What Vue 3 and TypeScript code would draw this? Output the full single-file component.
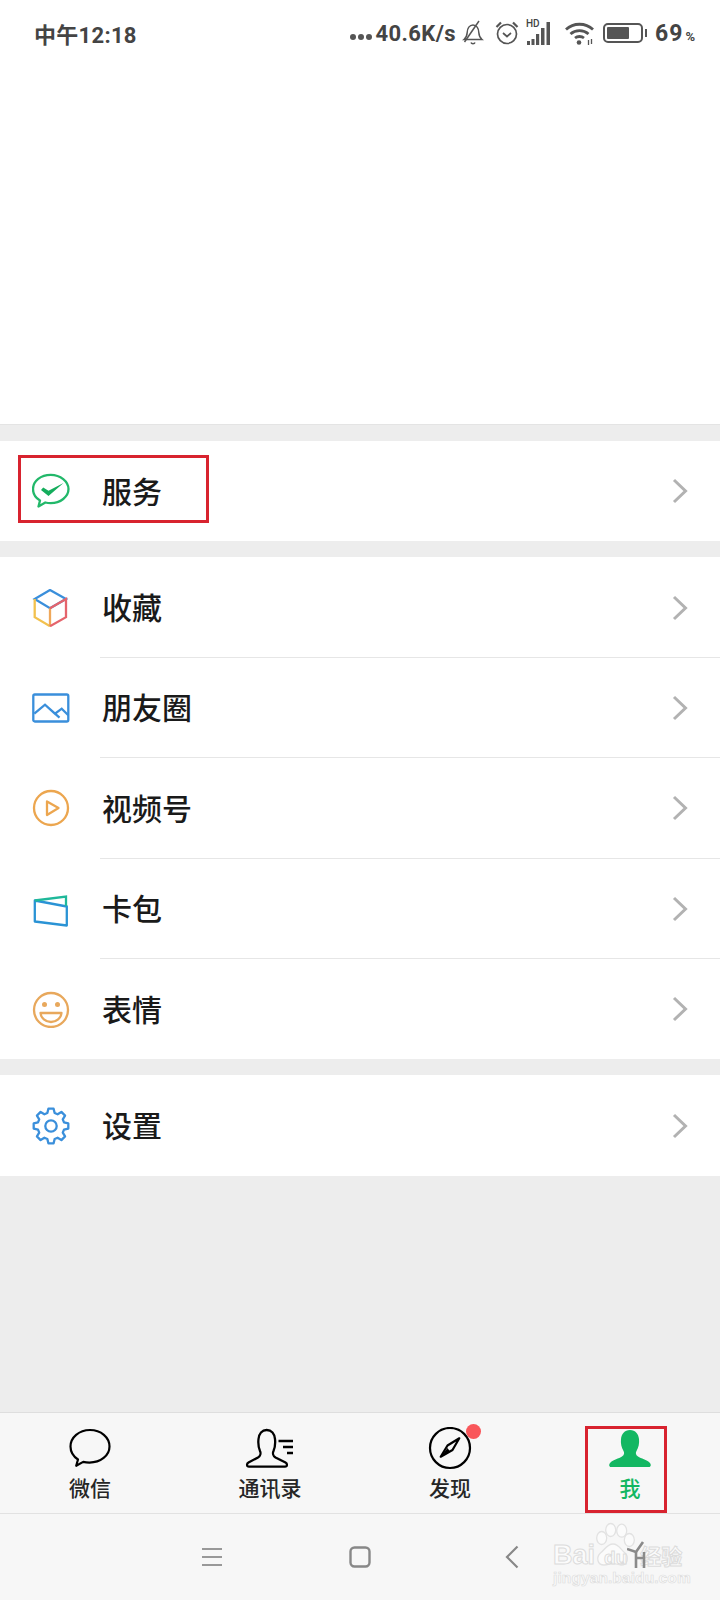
<template>
  <div class="phone">
    <div class="top">
      <div class="status">
        <span class="clock">中午12:18</span>
        <div class="status-right">
          <span class="dots"><i></i><i></i><i></i></span>
          <span class="speed">40.6K/s</span>
          <svg class="s-bell" width="22" height="26" viewBox="0 0 22 26" fill="none" stroke="#555" stroke-width="1.5">
            <path d="M2 19.500h18c-2.500-2-3-4-3.200-7-.2-4-2.200-7.500-5.800-7.500s-5.600 3.500-5.800 7.500c-.2 3-.7 5-3.200 7z" />
            <path d="M2.500 22 17 1" />
            <path d="M9 22.500c.5 1.600 3.500 1.600 4 0" />
          </svg>
          <svg class="s-alarm" width="24" height="26" viewBox="0 0 24 26" fill="none" stroke="#555" stroke-width="1.700">
            <circle cx="12" cy="14" r="9.500" />
            <path d="M8 13l4 3.500 4-3.500" />
            <path d="M1.500 7l4.500-4.500M22.500 7L18 2.500" stroke-width="2.200" />
          </svg>
          <div class="signal">
            <span class="hd">HD</span>
            <svg width="27" height="26" viewBox="0 0 27 26" fill="#555">
              <rect x="1" y="21" width="3" height="4" />
              <rect x="5.500" y="19" width="3" height="6" />
              <rect x="10" y="14" width="3.200" height="11" />
              <rect x="15" y="8" width="3.500" height="17" />
              <rect x="20.500" y="2" width="3.500" height="23" />
            </svg>
          </div>
          <svg class="s-wifi" width="29" height="26" viewBox="0 0 29 26" fill="none" stroke="#555" stroke-width="2.800">
            <path d="M1 9.500c7.500-7 19.500-7 27 0" />
            <path d="M5.500 14c5-4.500 13-4.500 18 0" />
            <path d="M10 18c2.500-2 6.500-2 9 0" />
            <circle cx="14" cy="22.500" r="2.300" fill="#555" stroke="none" />
            <path d="M23.500 20v5M26.500 19v5" stroke-width="1.300" />
          </svg>
          <div class="battery"><span class="level"></span></div>
          <span class="nub"></span>
          <span class="pct">69</span>
          <span class="pct-sign">%</span>
        </div>
      </div>
    </div>

    <section class="group first">
      <div v-for="item in serviceItems" :key="item.label" class="row">
        <svg class="row-icon" width="38" height="38" viewBox="0 0 38 38" fill="none" stroke-width="2.300" v-html="item.icon"></svg>
        <div class="row-body">
          <span class="row-label">{{ item.label }}</span>
          <svg class="chevron" width="16" height="26" viewBox="0 0 16 26" fill="none" stroke="#b2b2b2" stroke-width="3"><path d="M2 2l11.500 11L2 24" /></svg>
        </div>
      </div>
      <div class="mark mark-service"></div>
    </section>

    <section class="group">
      <div v-for="item in mainItems" :key="item.label" class="row">
        <svg class="row-icon" width="38" height="38" viewBox="0 0 38 38" fill="none" stroke-width="2.300" v-html="item.icon"></svg>
        <div class="row-body lined">
          <span class="row-label">{{ item.label }}</span>
          <svg class="chevron" width="16" height="26" viewBox="0 0 16 26" fill="none" stroke="#b2b2b2" stroke-width="3"><path d="M2 2l11.500 11L2 24" /></svg>
        </div>
      </div>
    </section>

    <section class="group">
      <div class="row">
        <svg class="row-icon" width="38" height="38" viewBox="0 0 38 38" fill="none" stroke="#3a8fdb" stroke-width="2.300">
          <path :d="gearPath" stroke-linejoin="round" />
          <circle cx="19" cy="19" r="5.700" />
        </svg>
        <div class="row-body">
          <span class="row-label">设置</span>
          <svg class="chevron" width="16" height="26" viewBox="0 0 16 26" fill="none" stroke="#b2b2b2" stroke-width="3"><path d="M2 2l11.500 11L2 24" /></svg>
        </div>
      </div>
    </section>

    <div class="spacer"></div>

    <nav class="tabs">
      <div class="tab">
        <svg width="60" height="44" viewBox="0 0 60 44" fill="none" stroke="#000" stroke-width="2.200">
          <path d="M30 3C19 3 10.500 10.500 10.500 19.500c0 5.500 3 10 7.500 13l-1.800 6.300 7-3.900c2 .5 4.200.7 6.300.7 11 0 20-7 20-16.100S41 3 30 3z" stroke-linejoin="round" />
        </svg>
        <span class="tab-label">微信</span>
      </div>
      <div class="tab">
        <svg width="60" height="44" viewBox="0 0 60 44" fill="none" stroke="#000" stroke-width="2.300">
          <path :d="personPath" stroke-linejoin="round" />
          <path d="M38.500 14h14.500M43 20h10M47 26h6" stroke-width="2.400" />
        </svg>
        <span class="tab-label">通讯录</span>
      </div>
      <div class="tab">
        <svg width="60" height="44" viewBox="0 0 60 44" fill="none" stroke="#000" stroke-width="2.200">
          <circle cx="30" cy="21" r="20" />
          <path d="M39.300 11.300L27.500 18.500 20.700 29.700 32.500 23z" stroke-linejoin="round" />
          <path d="M27.500 21L20.700 29.700 30 24.500z" fill="#000" stroke="none" />
        </svg>
        <span class="badge"></span>
        <span class="tab-label">发现</span>
      </div>
      <div class="tab active">
        <svg width="60" height="44" viewBox="0 0 60 44" fill="#13b762">
          <path :d="personFillPath" />
        </svg>
        <span class="tab-label">我</span>
        <div class="mark mark-me"></div>
      </div>
    </nav>

    <footer class="nav">
      <svg width="20" height="20" viewBox="0 0 20 20" fill="none" stroke="#999" stroke-width="2"><path d="M0 2h20M0 10h20M0 18h20" /></svg>
      <svg width="22" height="22" viewBox="0 0 22 22" fill="none" stroke="#888" stroke-width="2.400"><rect x="1.500" y="1.500" width="19" height="19" rx="4" /></svg>
      <svg width="14" height="24" viewBox="0 0 14 24" fill="none" stroke="#888" stroke-width="2.200"><path d="M12.500 1.500L2 12l10.500 10.500" /></svg>
      <div class="watermark">
        <svg class="paw" width="44" height="50" viewBox="0 0 44 50" fill="#fbfbfb" stroke="#e2e2e2" stroke-width="1.300">
          <ellipse cx="6.700" cy="18" rx="5" ry="6.500" />
          <ellipse cx="15.700" cy="10" rx="5" ry="6.500" />
          <ellipse cx="26.700" cy="10.700" rx="5" ry="6.500" />
          <ellipse cx="34.300" cy="20" rx="5" ry="6.500" />
          <path d="M18 24c6 0 8 6 12 9 4 4 3 12-4 12-3 0-5-1.500-8-1.500S13 45 9 45c-7 0-8-8-3.500-12 4-3 6.500-9 12.500-9z" />
        </svg>
        <div class="wm-main">
          <span>Bai</span><span class="wm-du">du</span><span class="wm-cn">经验</span>
        </div>
        <div class="wm-sub">jingyan.baidu.com</div>
      </div>
      <svg class="walker" width="20" height="28" viewBox="0 0 20 28" fill="none" stroke="#8a8a8a" stroke-width="2.600">
        <path d="M0 8l9 3 7-10" />
        <path d="M9 11v16M17 11v16M9 17h8" />
      </svg>
    </footer>
  </div>
</template>

<script setup lang="ts">
interface MenuItem {
  label: string
  icon: string
}

const blue = '#3a8fdb'
const orange = '#eca64f'

const serviceItems: MenuItem[] = [
  {
    label: '服务',
    icon: `<path d="M18.700 2.800C9 2.800 1 8.800 1 17c0 4.800 2.700 9 7 11.500L6.500 34.500l6.800-4c1.700.4 3.500.6 5.400.6 9.700 0 17.800-6.300 17.800-14S28.400 2.800 18.700 2.800z" stroke="#22b86a" stroke-linejoin="round"/>
      <path d="M9 18l2.200-2.500 5.300 3.300 15-7.800-15 13z" fill="#14ad5c"/>`
  }
]

const mainItems: MenuItem[] = [
  {
    label: '收藏',
    icon: `<path d="M18 1L2.700 10 18 19.200 34 10z" stroke="${blue}"/>
      <path d="M2.700 10v18.200L18 37.200" stroke="#f2c14e"/>
      <path d="M18 19.200V37.200" stroke="#efa85a"/>
      <path d="M18 19.200L34 10v18.200L18 37.200" stroke="#e5646c"/>`
  },
  {
    label: '朋友圈',
    icon: `<rect x="1.300" y="5.500" width="35" height="27" rx="1.500" stroke="${blue}"/>
      <path d="M2.300 24.700l10.700-9 10 9 6.700-5 6.600 6.500M23 24.700l4.500 4" stroke="${blue}"/>`
  },
  {
    label: '视频号',
    icon: `<circle cx="19" cy="19" r="17" stroke="${orange}"/>
      <path d="M15 12.500L26.500 19 15 26z" stroke="${orange}" stroke-linejoin="round"/>`
  },
  {
    label: '卡包',
    icon: `<path d="M2.800 10.500L34.800 16.500V35.500L2.800 31.500z" stroke="#2a93d5" stroke-linejoin="round"/>
      <path d="M2.800 10.500L34 6.500V16" stroke="#1fb89a"/>`
  },
  {
    label: '表情',
    icon: `<circle cx="19" cy="20" r="17" stroke="#e8a85c"/>
      <circle cx="12.500" cy="14.500" r="2.500" fill="#e8a85c"/>
      <circle cx="25.500" cy="14.500" r="2.500" fill="#e8a85c"/>
      <path d="M8.500 23h21c-.5 5-5 9-10.500 9s-10-4-10.500-9z" stroke="#e8a85c" stroke-linejoin="round"/>`
  }
]

const personPath =
  'M9 39.700H45C47.500 39.700 47.500 36.500 45.500 35.500L35.500 30.500C33 29 32.500 26 33.500 24C35 20.500 35.500 16.500 35 12C34.500 7 31.500 3 26.700 3C22 3 19 7 18.500 12C18 16.500 18.500 20.500 20 24C21 26 20.500 29 18 30.500L8.500 35.500C6.500 36.500 6.500 39.700 9 39.700Z'

const personFillPath =
  'M11 40H49C51 40 51.500 37.500 49.500 35.500C47 33 41 31.500 38 29.500C35.500 28 35.500 25.500 36.500 24C38.500 20.500 39.500 16.500 39 12C38.500 7 35.500 3 30 3C24.500 3 21.500 7 21 12C20.500 16.500 21.500 20.500 23.500 24C24.500 25.500 24.500 28 22 29.500C19 31.500 13 33 10.500 35.500C8.500 37.500 9 40 11 40Z'

// eight-toothed outline, generated so the teeth stay even
const gearPath = (() => {
  const points: string[] = []
  const teeth = 8
  const outer = 17.5
  const inner = 13.5
  for (let i = 0; i < teeth; i++) {
    const mid = (i / teeth) * Math.PI * 2 - Math.PI / 2
    const step = Math.PI / teeth
    const angles: [number, number][] = [
      [mid - step * 0.7, inner],
      [mid - step * 0.38, outer],
      [mid + step * 0.38, outer],
      [mid + step * 0.7, inner]
    ]
    for (const [a, r] of angles) {
      points.push(`${(19 + Math.cos(a) * r).toFixed(2)} ${(19 + Math.sin(a) * r).toFixed(2)}`)
    }
  }
  return 'M' + points.join('L') + 'Z'
})()
</script>

<style scoped>
.phone {
  width: 720px;
  height: 1600px;
  display: flex;
  flex-direction: column;
  background: #ededed;
  overflow: hidden;
  font-family: "Noto Sans CJK SC", "Noto Sans", sans-serif;
  color: #1a1a1a;
}

.top {
  height: 425px;
  background: #fff;
  border-bottom: 1px solid #e4e4e4;
  box-sizing: border-box;
}

.status {
  height: 66px;
  display: flex;
  align-items: center;
  justify-content: space-between;
  padding: 0 25px 0 34px;
  color: #444;
}

.clock {
  font-size: 22px;
  font-weight: 700;
  letter-spacing: 0.3px;
  font-family: Roboto, "Noto Sans CJK SC", sans-serif;
}

.status-right {
  display: flex;
  align-items: center;
}

.dots {
  display: flex;
  gap: 2px;
  margin-right: 3px;
  margin-top: 8px;
}

.dots i {
  width: 6px;
  height: 6px;
  border-radius: 50%;
  background: #555;
}

.speed {
  font-family: Roboto, sans-serif;
  font-weight: 700;
  font-size: 22px;
  letter-spacing: 0.4px;
}

.s-bell {
  margin-left: 6px;
}

.s-alarm {
  margin-left: 11px;
}

.signal {
  position: relative;
  margin-left: 7px;
}

.signal svg {
  display: block;
}

.hd {
  position: absolute;
  left: 0;
  top: -2px;
  font-size: 10px;
  line-height: 12px;
  font-family: Roboto, sans-serif;
  font-weight: 500;
}

.s-wifi {
  margin-left: 12px;
}

.battery {
  margin-left: 9px;
  width: 40px;
  height: 20px;
  box-sizing: border-box;
  border: 2px solid #555;
  border-radius: 5px;
  padding: 2px;
}

.level {
  display: block;
  width: 69%;
  height: 100%;
  background: #555;
  border-radius: 1px;
}

.nub {
  width: 2px;
  height: 8px;
  margin-left: 2px;
  background: #555;
}

.pct {
  margin-left: 8px;
  font-family: Roboto, sans-serif;
  font-weight: 700;
  font-size: 23px;
  letter-spacing: 1px;
}

.pct-sign {
  margin-left: 2px;
  margin-top: 6px;
  font-family: Roboto, sans-serif;
  font-weight: 700;
  font-size: 13px;
}

.group {
  position: relative;
  margin-top: 16px;
  background: #fff;
}

.row {
  height: 100.4px;
  display: flex;
  align-items: center;
  padding-left: 32px;
}

.row-icon {
  flex: none;
}

.row-body {
  flex: 1;
  align-self: stretch;
  margin-left: 30px;
  padding-left: 2px;
  padding-right: 32px;
  display: flex;
  align-items: center;
  justify-content: space-between;
}

.row:not(:last-child) .lined {
  box-shadow: inset 0 -1px 0 #e6e6e6;
}

.row-label {
  padding-bottom: 3px;
  font-size: 30px;
  font-weight: 500;
  line-height: 1;
  color: #1a1a1a;
}

.spacer {
  flex: 1;
}

.tabs {
  height: 102px;
  display: grid;
  grid-template-columns: repeat(4, 1fr);
  background: #f7f7f7;
  border-top: 1px solid #dedede;
  border-bottom: 1px solid #e2e2e2;
  box-sizing: border-box;
}

.tab {
  position: relative;
  display: flex;
  flex-direction: column;
  align-items: center;
  padding-top: 14px;
}

.tab svg {
  display: block;
}

.tab-label {
  margin-top: 3px;
  font-size: 21px;
  line-height: 26px;
  font-weight: 500;
  color: #262626;
}

.active .tab-label {
  color: #13b762;
}

.badge {
  position: absolute;
  left: 106px;
  top: 11px;
  width: 15px;
  height: 15px;
  border-radius: 50%;
  background: #f9565a;
}

.mark {
  position: absolute;
  box-sizing: border-box;
  border: 3px solid #d8232f;
}

.mark-service {
  left: 18px;
  top: 14px;
  width: 191px;
  height: 68px;
}

.mark-me {
  left: 45px;
  top: 13px;
  width: 82px;
  height: 87px;
}

.nav {
  position: relative;
  flex: none;
  height: 86px;
  display: flex;
  align-items: center;
  padding-left: 202px;
  background: #f7f7f7;
}

.nav svg:nth-child(2) {
  margin-left: 127px;
}

.nav svg:nth-child(3) {
  margin-left: 134px;
}

.nav .walker {
  position: absolute;
  left: 627px;
  top: 27px;
}

.watermark {
  position: absolute;
  left: 553px;
  top: 6px;
  width: 130px;
  height: 70px;
  color: #fbfbfb;
}

.paw {
  position: absolute;
  left: 42px;
  top: 0;
}

.wm-main {
  position: absolute;
  left: 0;
  top: 20px;
  display: flex;
  align-items: baseline;
  font-family: "Liberation Sans", sans-serif;
  font-size: 27px;
  font-weight: 700;
  line-height: 30px;
  white-space: nowrap;
  -webkit-text-stroke: 1px #dcdcdc;
}

.wm-du {
  margin-left: 9px;
  font-size: 19px;
}

.wm-cn {
  margin-left: 13px;
  font-family: "Noto Sans CJK SC", sans-serif;
  font-size: 21px;
}

.wm-sub {
  position: absolute;
  left: 0;
  top: 49px;
  font-family: "Liberation Sans", sans-serif;
  font-size: 15.500px;
  font-weight: 700;
  line-height: 18px;
  letter-spacing: 0.1px;
  white-space: nowrap;
  -webkit-text-stroke: 0.7px #dedede;
}
</style>
